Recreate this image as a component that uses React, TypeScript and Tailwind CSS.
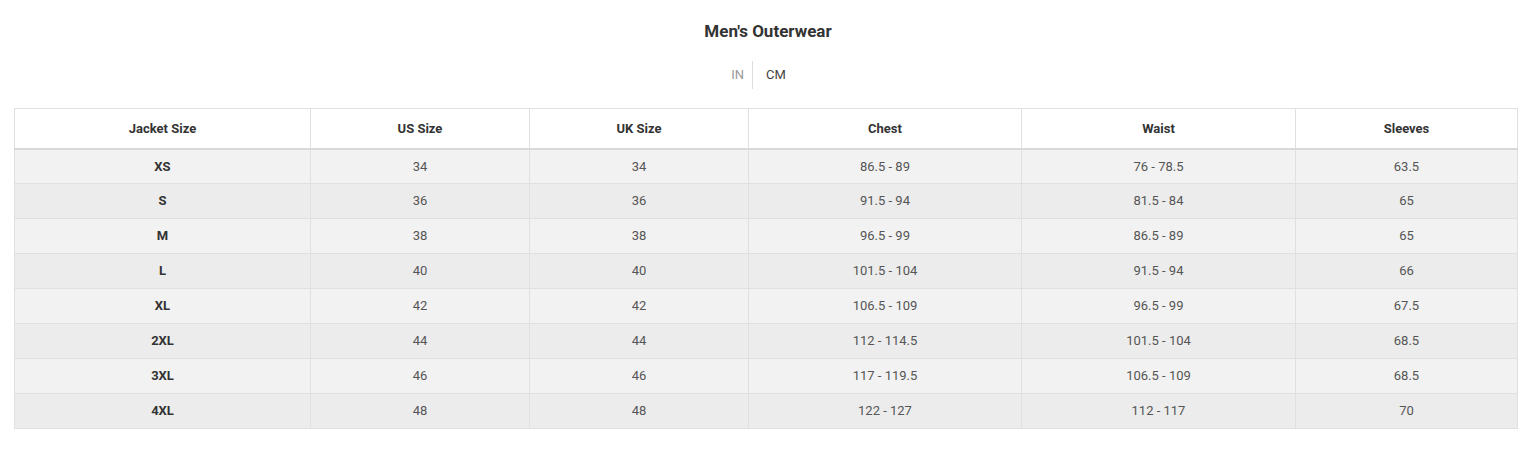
const columns = ['Jacket Size', 'US Size', 'UK Size', 'Chest', 'Waist', 'Sleeves']
const widths = ['w-[296px]', 'w-[219px]', 'w-[219px]', 'w-[273px]', 'w-[274px]', 'w-[222px]']

const rows = [
  ['XS', '34', '34', '86.5 - 89', '76 - 78.5', '63.5'],
  ['S', '36', '36', '91.5 - 94', '81.5 - 84', '65'],
  ['M', '38', '38', '96.5 - 99', '86.5 - 89', '65'],
  ['L', '40', '40', '101.5 - 104', '91.5 - 94', '66'],
  ['XL', '42', '42', '106.5 - 109', '96.5 - 99', '67.5'],
  ['2XL', '44', '44', '112 - 114.5', '101.5 - 104', '68.5'],
  ['3XL', '46', '46', '117 - 119.5', '106.5 - 109', '68.5'],
  ['4XL', '48', '48', '122 - 127', '112 - 117', '70'],
]

export default function App() {
  return (
    <div className="min-h-[453px] bg-white pt-[20px] px-[14px] font-['Roboto',sans-serif] text-[#333]">
      <h2 className="text-center text-[17px] font-bold leading-[22px]">Men's Outerwear</h2>

      <div className="mt-[19px] flex justify-center">
        <span className="px-[8px] text-[13px] leading-[28px] text-[#999]">IN</span>
        <span className="w-px bg-[#ddd]" />
        <span className="pl-[13px] pr-[27px] text-[13px] leading-[28px] text-[#444]">CM</span>
      </div>

      <table className="mt-[19px] w-[1503px] table-fixed border-collapse border border-[#e0e0e0] text-[13px]">
        <thead>
          <tr className="bg-white">
            {columns.map((c, i) => (
              <th
                key={c}
                className={`${widths[i]} h-[40px] border border-[#e0e0e0] border-b-2 border-b-[#d8d8d8] text-center font-bold text-[#333]`}
              >
                {c}
              </th>
            ))}
          </tr>
        </thead>
        <tbody>
          {rows.map((r, ri) => (
            <tr key={r[0]} className={ri % 2 === 0 ? 'bg-[#f2f2f2]' : 'bg-[#ececec]'}>
              {r.map((v, ci) => (
                <td
                  key={ci}
                  className={`h-[35px] border border-[#e0e0e0] text-center ${ci === 0 ? 'font-bold text-[#333]' : 'text-[#555]'}`}
                >
                  {v}
                </td>
              ))}
            </tr>
          ))}
        </tbody>
      </table>
    </div>
  )
}
